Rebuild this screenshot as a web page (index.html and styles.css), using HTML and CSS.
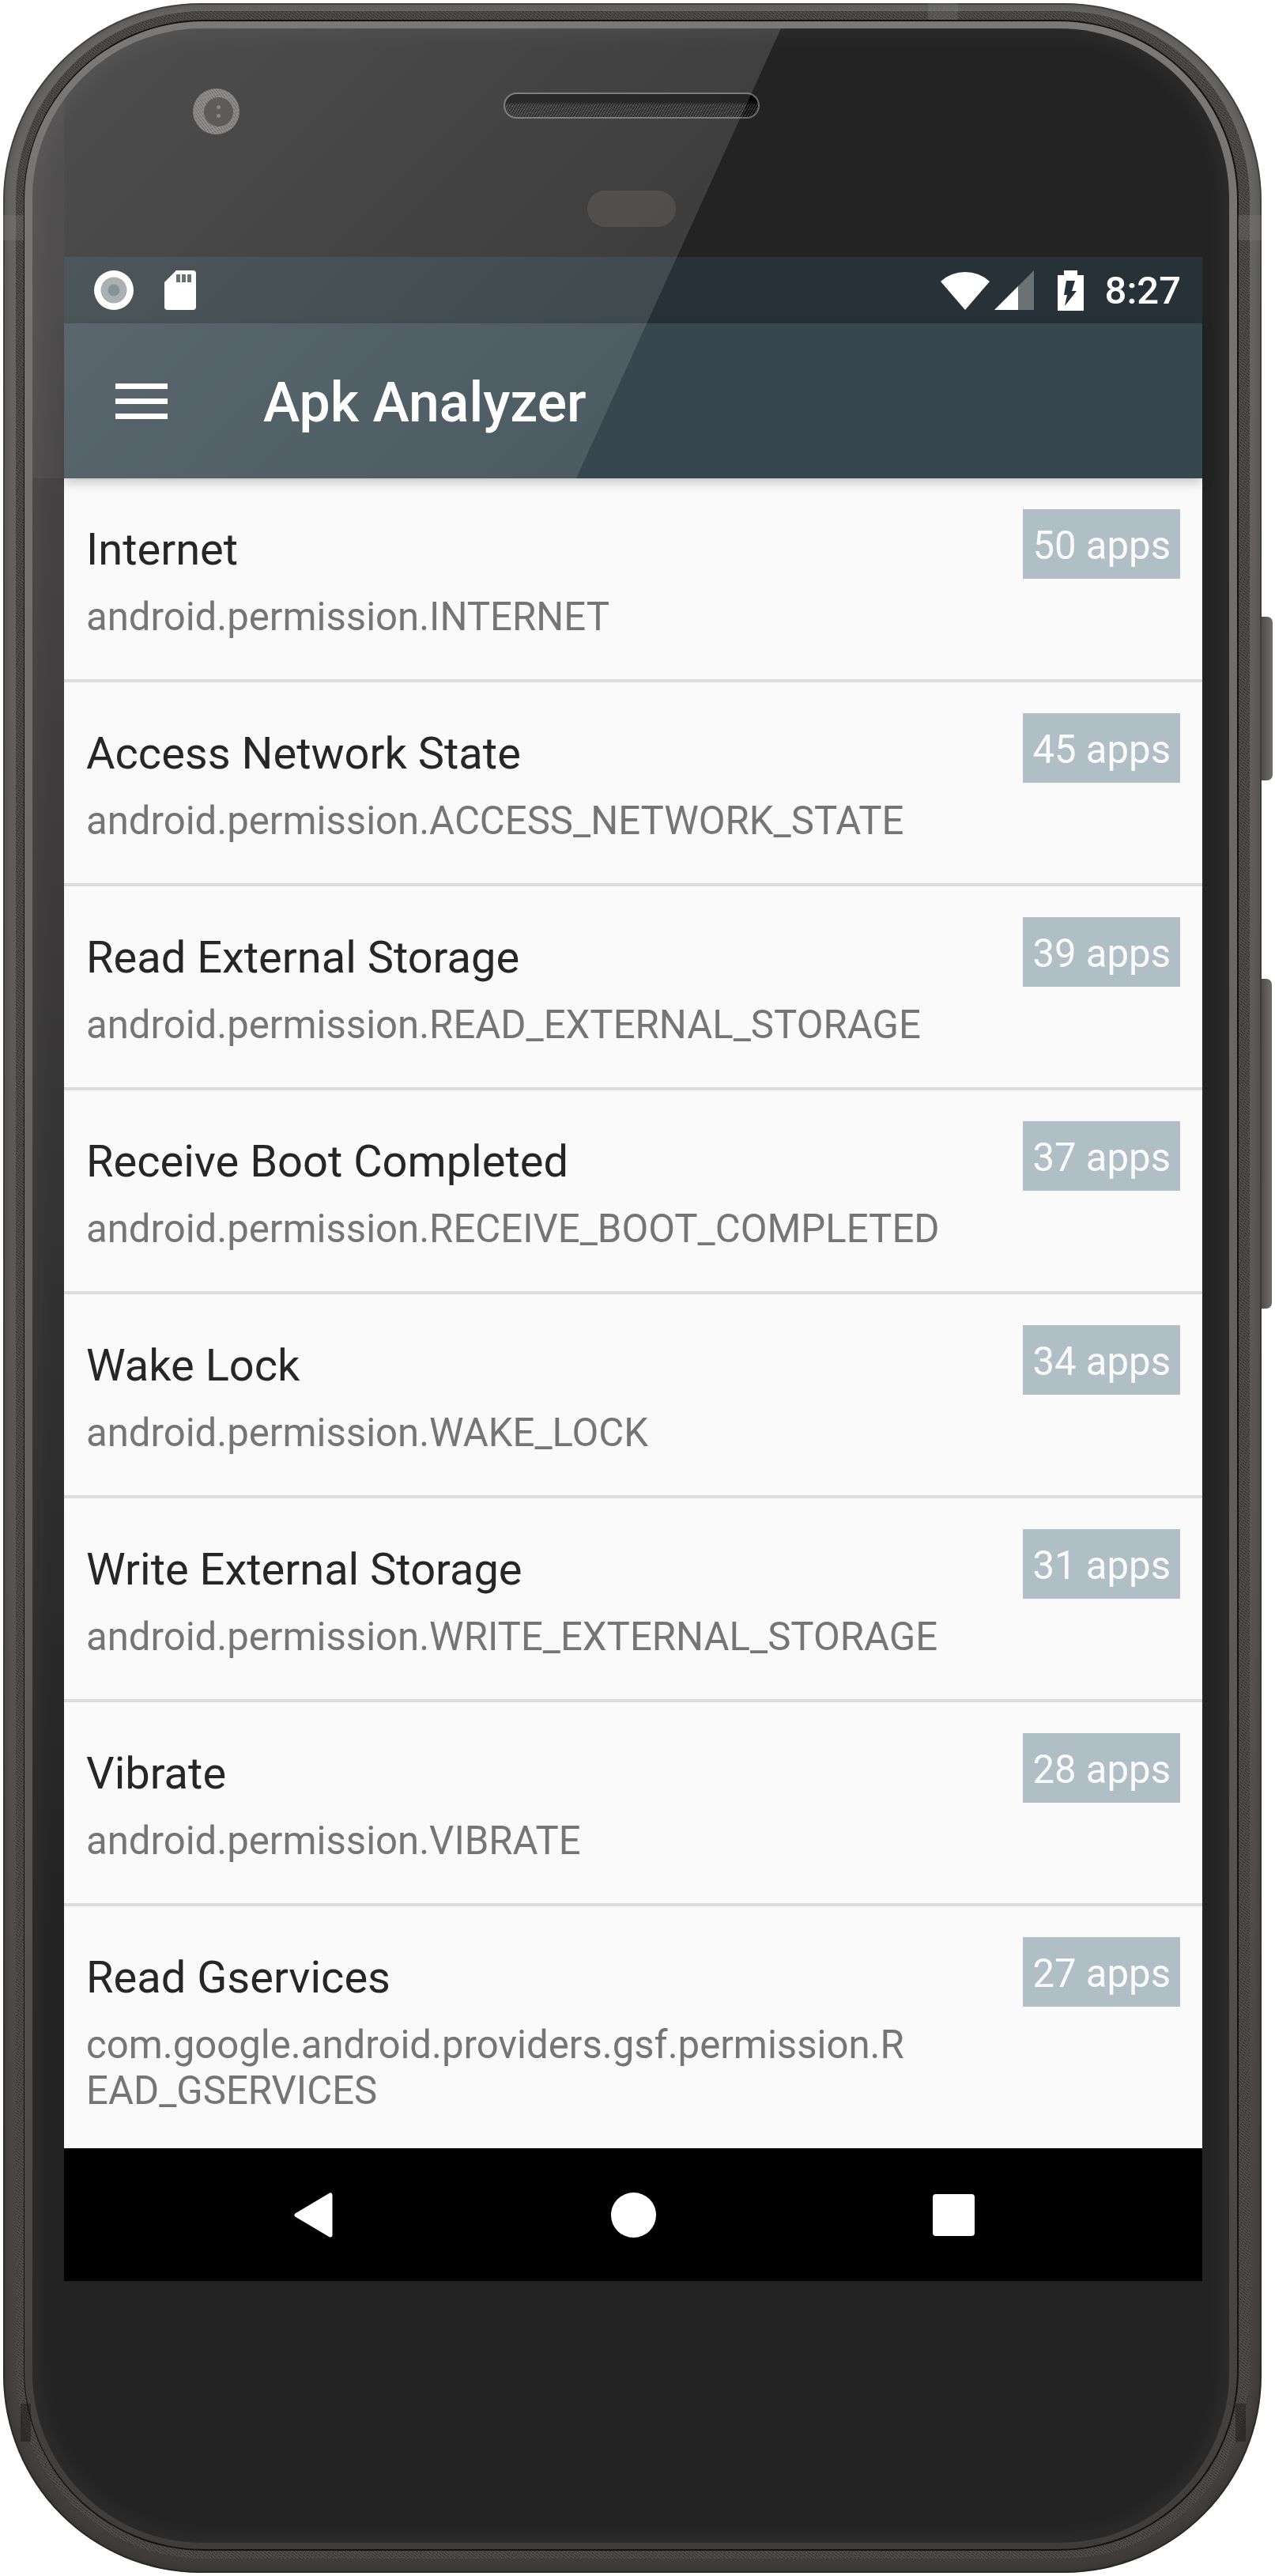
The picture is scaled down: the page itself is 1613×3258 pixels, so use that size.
FILE: index.html
```html
<!DOCTYPE html>
<html lang="en">
<head>
    <meta charset="UTF-8">
    <meta name="viewport" content="width=device-width, initial-scale=1.0">
    <title>Apk Analyzer</title>
    <link rel="stylesheet" href="styles.css">
</head>
<body>

    <div class="phone">
        <div class="side-button volume-rocker"></div>
        <div class="side-button power-button"></div>

        <div class="phone-grain">
            <div class="phone-rim">
                <div class="face">
                    <div class="face-top">
                        <div class="camera">
                            <div class="lens">
                                <span class="lens-dot"></span>
                                <span class="lens-dot"></span>
                            </div>
                        </div>
                        <div class="earpiece">
                            <div class="speaker"></div>
                            <div class="sensor"></div>
                        </div>
                    </div>

                    <div class="screen">
                        <div class="status-bar">
                            <div class="status-left">
                                <svg class="icon" width="50" height="50" viewBox="0 0 50 50">
                                    <circle cx="25" cy="25" r="25" fill="#fff"/>
                                    <circle cx="25" cy="25" r="16.5" fill="#9aa0a4"/>
                                    <circle cx="25" cy="25" r="7.5" fill="#737b80"/>
                                </svg>
                                <svg class="icon" width="40" height="50" viewBox="0 0 40 50">
                                    <path d="M15 0H36Q40 0 40 4V46Q40 50 36 50H4Q0 50 0 46V15Z" fill="#fff"/>
                                    <path d="M15 5h5v10h-5zM22 5h5v10h-5zM29 5h5v10h-5z" fill="#4a555b"/>
                                </svg>
                            </div>
                            <div class="status-right">
                                <svg class="icon wifi" width="62" height="50" viewBox="0 0 62 50">
                                    <path d="M31 50L0 14A46 46 0 0 1 62 14Z" fill="#fff"/>
                                </svg>
                                <svg class="icon signal" width="50" height="50" viewBox="0 0 50 50">
                                    <path d="M50 0V50H30V20Z" fill="#6b7276"/>
                                    <path d="M0 50L30 20V50Z" fill="#fff"/>
                                </svg>
                                <svg class="icon battery" width="33" height="51" viewBox="0 0 33 51">
                                    <path d="M8 0H25V6H33V51H0V6H8Z" fill="#fff"/>
                                    <path d="M11 13H22L18 26H24L9 45L12 31H8Z" fill="#263238"/>
                                </svg>
                                <span class="clock">8:27</span>
                            </div>
                        </div>

                        <div class="app-bar">
                            <svg class="menu-icon" width="66" height="45" viewBox="0 0 66 45">
                                <rect y="0" width="66" height="7" fill="#fff"/>
                                <rect y="19" width="66" height="7" fill="#fff"/>
                                <rect y="38" width="66" height="7" fill="#fff"/>
                            </svg>
                            <h1 class="app-title">Apk Analyzer</h1>
                        </div>

                        <div class="list">
                            <div class="row">
                                <div class="row-text">
                                    <div class="row-title">Internet</div>
                                    <div class="row-sub">android.permission.INTERNET</div>
                                </div>
                                <span class="count">50 apps</span>
                            </div>
                            <div class="row">
                                <div class="row-text">
                                    <div class="row-title">Access Network State</div>
                                    <div class="row-sub">android.permission.ACCESS_NETWORK_STATE</div>
                                </div>
                                <span class="count">45 apps</span>
                            </div>
                            <div class="row">
                                <div class="row-text">
                                    <div class="row-title">Read External Storage</div>
                                    <div class="row-sub">android.permission.READ_EXTERNAL_STORAGE</div>
                                </div>
                                <span class="count">39 apps</span>
                            </div>
                            <div class="row">
                                <div class="row-text">
                                    <div class="row-title">Receive Boot Completed</div>
                                    <div class="row-sub">android.permission.RECEIVE_BOOT_COMPLETED</div>
                                </div>
                                <span class="count">37 apps</span>
                            </div>
                            <div class="row">
                                <div class="row-text">
                                    <div class="row-title">Wake Lock</div>
                                    <div class="row-sub">android.permission.WAKE_LOCK</div>
                                </div>
                                <span class="count">34 apps</span>
                            </div>
                            <div class="row">
                                <div class="row-text">
                                    <div class="row-title">Write External Storage</div>
                                    <div class="row-sub">android.permission.WRITE_EXTERNAL_STORAGE</div>
                                </div>
                                <span class="count">31 apps</span>
                            </div>
                            <div class="row">
                                <div class="row-text">
                                    <div class="row-title">Vibrate</div>
                                    <div class="row-sub">android.permission.VIBRATE</div>
                                </div>
                                <span class="count">28 apps</span>
                            </div>
                            <div class="row row-last">
                                <div class="row-text">
                                    <div class="row-title">Read Gservices</div>
                                    <div class="row-sub">com.google.android.providers.gsf.permission.R<br>EAD_GSERVICES</div>
                                </div>
                                <span class="count">27 apps</span>
                            </div>
                        </div>

                        <div class="nav-bar">
                            <svg width="49" height="57" viewBox="0 0 49 57">
                                <path d="M3 28.5L46 3V54Z" fill="#fff" stroke="#fff" stroke-width="5" stroke-linejoin="round"/>
                            </svg>
                            <span class="nav-home"></span>
                            <span class="nav-recent"></span>
                        </div>
                    </div>

                    <!-- glass reflection over the top of the face -->
                    <div class="glare"></div>
                </div>
            </div>
        </div>

        <!-- antenna bands cut into the metal -->
        <div class="band band-top"></div>
        <div class="band band-left-top"></div>
        <div class="band band-right-top"></div>
        <div class="band band-left-bottom"></div>
        <div class="band band-right-bottom"></div>
    </div>

</body>
</html>
```

FILE: styles.css
```css
* {
    box-sizing: border-box;
}

body {
    margin: 0;
    background-color: #fff;
    font-family: Roboto, "Liberation Sans", sans-serif;
}

/* phone body, outside in */
.phone {
    position: relative;
    width: 1592px;
    margin: 4px 0 4px 4px;
    padding: 10px 15px 18px 16px;
    border-radius: 250px;
    background: linear-gradient(180deg, #686665 0, #625f5d 25%, #585553 60%, #3f3c39 100%);
    box-shadow:
        inset 0 0 0 2px rgba(0, 0, 0, 0.28),
        inset 0 0 6px 6px rgba(0, 0, 0, 0.1);
}

.phone-grain {
    padding: 11px 14px 10px 10px;
    border-radius: 238px;
    background:
        repeating-linear-gradient(37deg, rgba(0, 0, 0, 0.25) 0 1px, transparent 1px 3px),
        repeating-linear-gradient(113deg, rgba(255, 255, 255, 0.07) 0 1px, transparent 1px 2px),
        #474543;
}

.phone-rim {
    padding: 9px 10px 8px 10px;
    border: 2px solid #141312;
    border-left-width: 1px;
    border-radius: 228px;
    background: linear-gradient(180deg, #7a7978 0, #6a6967 35%, #5f5e5b 60%, #3f3d3b 100%);
}

/* left strip is darker above 569px because the glare lights it there */
.face {
    position: relative;
    display: flex;
    flex-direction: column;
    padding: 0 34px 331px 40px;
    border-radius: 215px;
    overflow: hidden;
    background:
        linear-gradient(180deg, #2a2828 569px, #454343 569px, #2d2c2c 1900px, #242323 2400px) left top / 40px 100% no-repeat,
        #242323;
    box-shadow: inset 0 0 34px rgba(255, 255, 255, 0.08);
}

.glare {
    position: absolute;
    top: 0;
    left: 0;
    width: 947px;
    height: 569px;
    background: linear-gradient(135deg, rgba(255, 255, 255, 0.2), rgba(255, 255, 255, 0.09));
    clip-path: polygon(0 0, 947px 0, 688px 569px, 0 569px);
    pointer-events: none;
}

.side-button {
    position: absolute;
    left: 1592px;
    width: 14px;
    border-radius: 0 7px 7px 0;
    background: linear-gradient(90deg, #4f4c49, #6f6d6b);
}

.volume-rocker {
    top: 776px;
    height: 207px;
}

.power-button {
    top: 1234px;
    width: 13px;
    height: 417px;
}

.band {
    position: absolute;
    background-color: rgba(130, 130, 130, 0.28);
}

.band-top {
    top: 0;
    left: 1170px;
    width: 38px;
    height: 21px;
}

.band-left-top {
    top: 268px;
    left: 0;
    width: 26px;
    height: 32px;
}

.band-right-top {
    top: 268px;
    right: 0;
    width: 30px;
    height: 32px;
}

.band-left-bottom {
    top: 3036px;
    left: 22px;
    width: 13px;
    height: 48px;
    background-color: rgba(0, 0, 0, 0.3);
}

.band-right-bottom {
    top: 3036px;
    right: 20px;
    width: 13px;
    height: 48px;
    background-color: rgba(0, 0, 0, 0.3);
}

/* camera, speaker and sensor above the screen */
.face-top {
    display: flex;
    height: 289px;
    padding: 76px 0 0 163px;
}

.camera {
    display: flex;
    align-items: center;
    justify-content: center;
    width: 59px;
    height: 58px;
    border-radius: 50%;
    background:
        repeating-linear-gradient(53deg, rgba(0, 0, 0, 0.25) 0 1px, transparent 1px 3px),
        #767473;
}

.lens {
    display: flex;
    flex-direction: column;
    align-items: center;
    justify-content: center;
    gap: 6px;
    width: 37px;
    height: 37px;
    margin-left: 5px;
    border-radius: 50%;
    background-color: #3a3937;
}

.lens-dot {
    width: 5px;
    height: 5px;
    border-radius: 50%;
    background-color: #6f6e6c;
}

.earpiece {
    display: flex;
    flex-direction: column;
    align-items: center;
    margin-left: 334px;
}

.speaker {
    width: 324px;
    height: 33px;
    margin-top: 5px;
    border: 2px solid #6b6968;
    border-radius: 17px;
    background:
        linear-gradient(180deg, #050505 0 10px, transparent 14px),
        repeating-linear-gradient(120deg, #3c3c3c 0 1px, #121212 1px 3px);
}

.sensor {
    width: 112px;
    height: 46px;
    margin-top: 91px;
    border-radius: 23px;
    background-color: #363532;
}

/* screen */
.screen {
    display: flex;
    flex-direction: column;
    width: 1440px;
    height: 2560px;
}

.status-bar {
    display: flex;
    align-items: center;
    justify-content: space-between;
    height: 84px;
    padding: 0 27px 0 38px;
    background-color: #263238;
}

.status-left,
.status-right {
    display: flex;
    align-items: center;
}

.status-left {
    gap: 39px;
}

.icon {
    display: block;
}

.signal {
    margin-left: 6px;
}

.battery {
    margin-left: 30px;
}

.clock {
    margin-left: 27px;
    padding-top: 2px;
    font-size: 49px;
    font-weight: 500;
    line-height: 84px;
    color: #fff;
}

.app-bar {
    position: relative;
    display: flex;
    align-items: center;
    flex-shrink: 0;
    height: 196px;
    padding-left: 65px;
    background-color: #37474f;
    box-shadow: 0 5px 14px rgba(0, 0, 0, 0.22);
}

.menu-icon {
    display: block;
}

.app-title {
    margin: 0 0 0 121px;
    padding-top: 3px;
    font-size: 69.7px;
    font-weight: 500;
    color: #fff;
}

.list {
    flex: 1;
    background-color: #fafafa;
}

.row {
    display: flex;
    align-items: flex-start;
    justify-content: space-between;
    height: 258px;
    padding: 39px 28px 0;
    border-bottom: 4px solid #dcdcdc;
}

.row-last {
    height: 306px;
    border-bottom: none;
}

.row-text {
    padding-top: 18px;
}

.row-title {
    font-size: 56px;
    color: #262626;
}

.row-sub {
    margin-top: 23px;
    font-size: 49.1px;
    color: #757575;
}

.count {
    height: 88px;
    padding: 0 12px;
    font-size: 49.1px;
    line-height: 92px;
    color: #fafafa;
    background-color: #b0bec5;
}

.nav-bar {
    display: grid;
    grid-template-columns: repeat(3, 405px);
    justify-content: center;
    justify-items: center;
    align-items: center;
    flex-shrink: 0;
    height: 168px;
    background-color: #000;
}

.nav-home {
    width: 57px;
    height: 57px;
    border-radius: 50%;
    background-color: #fff;
}

.nav-recent {
    width: 53px;
    height: 53px;
    border-radius: 4px;
    background-color: #fff;
}
```
